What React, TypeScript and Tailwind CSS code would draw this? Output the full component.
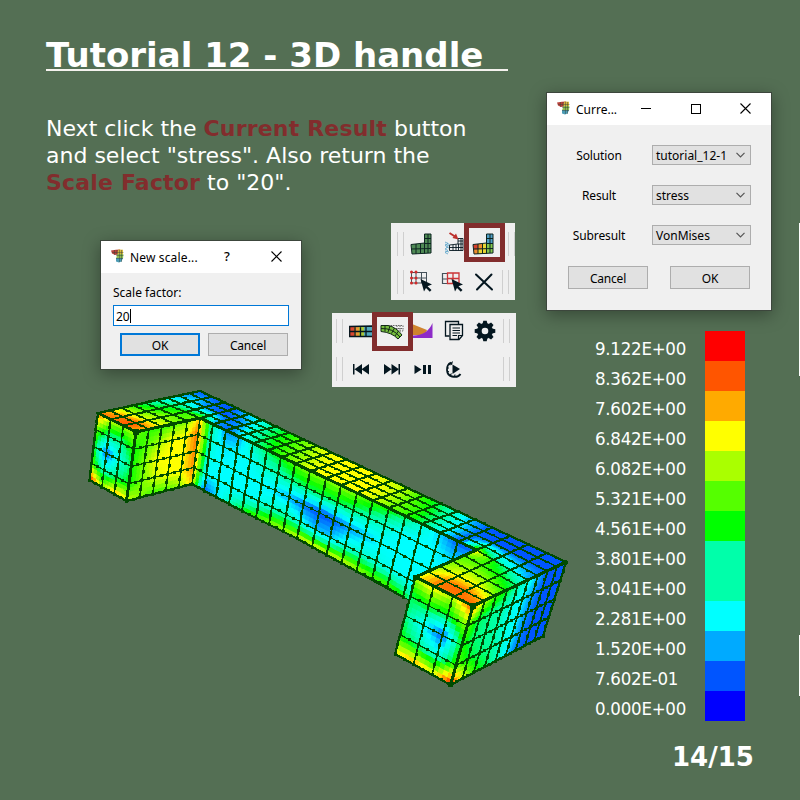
import React from "react";

type P = [number, number];

const PALETTE: number[][] = [
  [0, 0, 255], [0, 85, 255], [0, 170, 255], [0, 255, 255], [0, 255, 210], [0, 255, 150],
  [0, 255, 0], [85, 255, 0], [170, 255, 0], [255, 255, 0], [255, 170, 0], [255, 85, 0], [255, 0, 0],
];

function color(v: number) {
  const c = Math.max(0, Math.min(11.999, v));
  const i = Math.floor(c);
  const f = c - i;
  const m = PALETTE[i].map((a, k) => Math.round(a + (PALETTE[i + 1][k] - a) * f));
  return `rgb(${m[0]},${m[1]},${m[2]})`;
}

const mix = (a: P, b: P, t: number): P => [a[0] + (b[0] - a[0]) * t, a[1] + (b[1] - a[1]) * t];

/* Points between two ends, each step longer than the last by the ratio. */
function line(a: P, b: P, n: number, ratio = 1): P[] {
  const out: P[] = [];
  for (let i = 0; i <= n; i++) {
    const t = ratio === 1 ? i / n : (Math.pow(ratio, i) - 1) / (Math.pow(ratio, n) - 1);
    out.push(mix(a, b, t));
  }
  return out;
}

function sample(vals: number[][], u: number, v: number) {
  const R = vals.length - 1;
  const C = vals[0].length - 1;
  const y = Math.min(v * R, R - 1e-6);
  const x = Math.min(u * C, C - 1e-6);
  const j = Math.floor(y);
  const i = Math.floor(x);
  const fx = x - i;
  const fy = y - j;
  return (
    (vals[j][i] * (1 - fx) + vals[j][i + 1] * fx) * (1 - fy) +
    (vals[j + 1][i] * (1 - fx) + vals[j + 1][i + 1] * fx) * fy
  );
}

const INK = "#004b00";

interface FaceProps {
  top: P[];
  bottom: P[];
  rows: number;
  vals: number[][];
  across?: number;
  down?: number;
  mark?: [number, number];
}

function Face({ top, bottom, rows, vals, across = 1.2, down = 1.8, mark = [3, 3] }: FaceProps) {
  const n = top.length - 1;
  const S = 4;
  const at = (i: number, j: number): P => {
    const k = Math.min(Math.floor(i), n - 1);
    const f = i - k;
    return mix(mix(top[k], top[k + 1], f), mix(bottom[k], bottom[k + 1], f), j / rows);
  };
  const fills: React.ReactNode[] = [];
  for (let j = 0; j < rows * S; j++) {
    for (let i = 0; i < n * S; i++) {
      const x0 = i / S;
      const y0 = j / S;
      const d = 1 / S;
      const pts = [at(x0, y0), at(x0 + d, y0), at(x0 + d, y0 + d), at(x0, y0 + d)];
      const c = color(sample(vals, (x0 + d / 2) / n, (y0 + d / 2) / rows));
      fills.push(<polygon key={`${i}-${j}`} points={pts.map((p) => p.map((q) => q.toFixed(1)).join()).join(" ")} fill={c} stroke={c} strokeWidth={0.5} />);
    }
  }
  const h: string[] = [];
  const v: string[] = [];
  const marks: P[] = [];
  for (let j = 0; j <= rows; j++) {
    h.push("M" + top.map((_, i) => at(i, j).join()).join("L"));
    for (let i = 0; i <= n * 2; i++) marks.push(at(i / 2, j));
  }
  for (let i = 0; i <= n; i++) {
    v.push(`M${at(i, 0).join()}L${at(i, rows).join()}`);
    for (let j = 0; j < rows; j++) marks.push(at(i, j + 0.5));
  }
  return (
    <g shapeRendering="crispEdges">
      {fills}
      <path d={h.join("")} fill="none" stroke={INK} strokeWidth={across} />
      <path d={v.join("")} fill="none" stroke={INK} strokeWidth={down} />
      {marks.map((p, i) => (
        <rect key={i} x={Math.round(p[0] - mark[0] / 2)} y={Math.round(p[1] - mark[1] / 2)} width={mark[0]} height={mark[1]} fill={INK} />
      ))}
    </g>
  );
}

const FRONT_TOP: P[] = [
  [200, 418], [213, 424], [226, 430], [239, 436], [253, 443], [267, 450], [281, 457], [295, 463.5], [310, 471], [326, 478],
  [341, 485], [357, 493], [373, 500.5], [389, 508], [405.5, 516], [422, 524], [440, 533], [458, 541.5], [476.5, 550],
];
const FRONT_BOTTOM: P[] = [
  [192, 484], [204, 491], [216, 497], [229, 504], [242, 511], [256, 518], [269, 524], [283, 531.5], [297, 538.5], [312, 547],
  [326.5, 555], [341.5, 563], [356.5, 571], [372, 578.5], [387, 587], [403, 597], [419, 605], [436, 613], [453, 621],
];
const BEAM_BACK = line([200, 391], [566, 562], 24, 1.02);
const BEAM_FRONT: P[] = [
  ...line([156, 400], [200, 418], 3).slice(0, 3),
  ...FRONT_TOP,
  ...line([476.5, 550], [527.5, 580], 3).slice(1),
];
const SIDE_TOP = line([473, 606], [566, 562], 9, 0.965);
const SIDE_BOTTOM = line([450.5, 685], [543, 636], 9, 0.965);

const V_FRONT = [
  [9.5, 4.6, 1.7, 1.8, 4.3, 5.5, 6, 7, 7.5, 7.5, 7.8, 7.5, 6.7, 6.3, 5.5, 4, 2.5, 1, 1],
  [10.4, 4, 2.7, 3, 3.2, 4, 4.5, 5, 5.4, 5.5, 5.5, 5, 4.5, 4, 3, 3, 3, 2.5, 3],
  [10, 3.4, 3, 3, 3, 3, 2.6, 2.1, 1.3, 0.9, 1, 1.8, 2.3, 3, 3, 3, 3, 3, 3],
  [9.8, 3, 3, 3, 3, 3.3, 4, 4.3, 3.4, 2.2, 2.4, 3.6, 4, 3.6, 3.2, 3, 3, 3, 3],
  [8.5, 1, 2.5, 4.5, 6, 7, 7.6, 8, 8.6, 9, 8.7, 8.6, 8, 7, 7, 6, 4, 3, 3],
];
const V_BEAM = [
  [1, 1, 1, 1, 2.5, 3.5, 5, 6, 7, 8, 9, 9, 9, 9, 8.5, 8, 6.5, 5.5, 4, 2, 1, 1, 1, 1, 1],
  [2, 3, 1.6, 1, 1, 2, 4.5, 5.7, 6.5, 7.3, 8.3, 9, 9, 9, 9, 8.4, 7.2, 6.3, 5, 3, 1.2, 1, 1, 1, 1],
  [4, 5.5, 6.3, 7.5, 2, 1, 2.5, 4.7, 5.8, 6.7, 7.7, 8.8, 9, 9, 9, 8.4, 7.3, 6.6, 5.3, 3.2, 1, 8, 5, 3.5, 2],
];
const V_LEFT_TOP = [
  [4, 5.5, 6.3, 7.5], [5, 6, 7, 7], [6, 7, 8, 7.5], [8, 8, 8.6, 9], [9.4, 10.5, 11, 10], [10.9, 10.5, 11, 9.7],
];
const V_RIGHT_TOP = [
  [9.5, 6.2, 4.5, 3], [7, 6.8, 6, 5], [7.4, 8, 7.5, 6], [7.8, 9, 9, 7.5], [8.6, 10.6, 10.8, 9.6], [9, 10.6, 10.6, 11],
];
const V_LEFT_END = [
  [11, 8.5, 7.7, 8], [7, 4.9, 4.8, 6.5], [6, 1, 3.6, 5.4], [7, 4, 5, 6], [12, 8, 10, 9],
];
const V_LEFT_SIDE = [
  [7.5, 6.5, 6.5, 7, 7.5, 9.5], [6, 7, 8, 9, 9, 10.7], [6, 7.5, 9, 9, 9, 10.5], [6, 7.3, 8.5, 9, 9, 10.3], [8.4, 7.6, 6.6, 6.8, 7.7, 9.6],
];
const V_RIGHT_END = [
  [8, 9.4, 8.2, 11.2], [5.3, 6, 5.7, 7.6], [5.2, 3, 1, 5.9], [6, 4.8, 3.6, 6.5], [9.2, 10.2, 9, 12],
];
const V_RIGHT_SIDE = [
  [11, 8.4, 6.7, 6, 5, 3.6, 2.4, 1, 1, 1], [7.3, 5.4, 5, 4.7, 3.7, 2.9, 1.8, 1, 1, 1], [6.3, 5.2, 5, 4.6, 3.6, 2.9, 1.6, 1, 1, 1],
  [7.2, 5.8, 5.2, 5, 4, 2.9, 1.5, 1, 1, 1], [11.8, 8.8, 6.4, 5.5, 4.5, 2.6, 1.3, 1, 1, 1],
];

function Model() {
  return (
    <svg className="absolute left-0 top-0" width="800" height="800" viewBox="0 0 800 800">
      <Face top={FRONT_TOP} bottom={FRONT_BOTTOM} rows={4} vals={V_FRONT} />
      <Face top={BEAM_BACK} bottom={BEAM_FRONT} rows={4} vals={V_BEAM} across={1.6} down={2} mark={[4, 2]} />
      <Face top={line([156, 400], [200, 418], 3)} bottom={line([98, 413], [136, 432], 3)} rows={5} vals={V_LEFT_TOP} across={1.5} mark={[4, 2]} />
      <Face top={line([476.5, 550], [527.5, 580], 3)} bottom={line([415.5, 577], [473, 606], 3)} rows={5} vals={V_RIGHT_TOP} across={1.5} mark={[4, 2]} />
      <Face top={line([98, 413], [136, 432], 3)} bottom={line([89.5, 480], [126.5, 501], 3)} rows={4} vals={V_LEFT_END} down={1.5} />
      <Face top={line([136, 432], [200, 418], 5)} bottom={line([126.5, 501], [192, 484], 5)} rows={4} vals={V_LEFT_SIDE} down={1.5} />
      <Face top={line([415.5, 577], [473, 606], 3, 1.05)} bottom={line([395, 654], [450.5, 685], 3)} rows={4} vals={V_RIGHT_END} down={1.6} />
      <Face top={SIDE_TOP} bottom={SIDE_BOTTOM} rows={4} vals={V_RIGHT_SIDE} across={1.6} down={1.7} />
      <path
        d="M98 413L136 432L200 418L476.5 550M136 432L126.5 501M415.5 577L473 606L566 562M473 606L450.5 685M415.5 577L476.5 550"
        fill="none" stroke={INK} strokeWidth="3" shapeRendering="crispEdges"
      />
      <path
        d="M98 413L200 391L566 562L543 636L450.5 685L395 654L415.5 577M98 413L89.5 480L126.5 501L192 484L242 511L297 538.5L403 597"
        fill="none" stroke={INK} strokeWidth="2.200" shapeRendering="crispEdges"
      />
      <path d="M133 429h6v6h-6ZM470 603h6v6h-6ZM448 682h5v5h-5ZM563 560h4v5h-4ZM413 575h4v5h-4Z" fill={INK} />
    </svg>
  );
}

function AppIcon() {
  return (
    <svg width="14" height="14" viewBox="0 0 14 14" className="mb-[2px] shrink-0">
      <path d="M0 1.500L5 .8L9 .5V5L4 6L1 4.500Z" fill="#b8403a" />
      <path d="M7.500 .5L12 .8V6H6.500V3Z" fill="#d9b73e" />
      <path d="M6.500 5H12.300L12 9.500H5Z" fill="#8ebc50" />
      <path d="M5 9H12L10.500 12.500L8 13.500L5 12.500Z" fill="#4c9cb5" />
      <path d="M1 3.500H12.500M5 6.500H12.500M5 9.500H12M3.500 1V6M6 1V6M8.500 1V13M10.500 1V13" stroke="#36463a" strokeWidth=".45" fill="none" />
    </svg>
  );
}

function CloseIcon() {
  return (
    <svg width="11" height="11" viewBox="0 0 11 11" className="mb-[2px]">
      <path d="M.5.5L10.500 10.500M10.500.5L.5 10.500" stroke="#000" strokeWidth="1.1" />
    </svg>
  );
}

function Combo({ label, value }: { label: string; value: string }) {
  return (
    <div className="flex h-5 items-center">
      <div className="w-[104px] pt-[2px] text-center tracking-[-0.1px]">{label}</div>
      <div className="ml-px flex h-5 w-[99px] items-center justify-between border border-[#adadad] bg-[#e1e1e1] pl-[3px] pr-[5px]">
        <span className="whitespace-nowrap pt-[2px]">{value}</span>
        <svg width="9" height="6" viewBox="0 0 9 6"><path d="M.5.8L4.500 4.800L8.500.8" fill="none" stroke="#555" strokeWidth="1.2" /></svg>
      </div>
    </div>
  );
}

const UI = "font-['Noto_Sans','Open_Sans',sans-serif] text-[12px] leading-4 text-black";
const BTN = "flex items-center justify-center bg-[#e1e1e1] pt-[2px] tracking-[-0.2px]";

function ResultDialog() {
  return (
    <section className={`absolute left-[546px] top-[92px] h-[219px] w-[226px] border border-[#3c463c] bg-[#f0f0f0] shadow-[0_4px_16px_rgba(0,0,0,0.35)] ${UI}`}>
      <header className="flex h-8 items-center bg-white pl-[10px]">
        <AppIcon />
        <span className="ml-[5px] w-[65px] pt-px">Curre...</span>
        <svg className="mb-[2px]" width="11" height="11" viewBox="0 0 11 11"><path d="M0 5.500H10" stroke="#000" /></svg>
        <svg className="mb-[2px] ml-[38px]" width="11" height="11" viewBox="0 0 11 11"><path d="M1.500 1.500H10.500V10.500H1.500Z" fill="none" stroke="#000" shapeRendering="crispEdges" /></svg>
        <span className="ml-[39px]"><CloseIcon /></span>
      </header>
      <div className="flex flex-col gap-5 pt-5">
        <Combo label="Solution" value="tutorial_12-1" />
        <Combo label="Result" value="stress" />
        <Combo label="Subresult" value="VonMises" />
      </div>
      <div className="mt-[21px] flex gap-[22px] pl-[21px]">
        <div className={`${BTN} h-[23px] w-20 border border-[#adadad]`}>Cancel</div>
        <div className={`${BTN} h-[23px] w-20 border border-[#adadad]`}>OK</div>
      </div>
    </section>
  );
}

function ScaleDialog() {
  return (
    <section className={`absolute left-[100px] top-[240px] h-[130px] w-[202px] border border-[#3c463c] bg-[#f0f0f0] shadow-[0_4px_16px_rgba(0,0,0,0.35)] ${UI}`}>
      <header className="flex h-8 items-center bg-white pl-[10px]">
        <AppIcon />
        <span className="ml-[5px] w-[94px] pt-px tracking-[0.15px]">New scale...</span>
        <span className="pb-[2px] text-[13px] font-medium">?</span>
        <span className="ml-[41px]"><CloseIcon /></span>
      </header>
      <div className="px-3 pt-3">Scale factor:</div>
      <div className="mx-3 mt-1 flex h-[21px] items-center border border-[#0078d7] bg-white pl-[2px] pt-px">
        <span className="pt-px">20</span><span className="h-[14px] w-px bg-black" />
      </div>
      <div className="mt-[7px] flex gap-2 pl-[19px]">
        <div className={`${BTN} h-[23px] w-20 border-2 border-[#0078d7]`}>OK</div>
        <div className={`${BTN} h-[23px] w-20 border border-[#adadad]`}>Cancel</div>
      </div>
    </section>
  );
}

function Grip() {
  return <div className="h-6 w-[7px] shrink-0 border-x border-[#cfcfcf]" />;
}

function Tool({ children, frame }: { children: React.ReactNode; frame?: string }) {
  return (
    <div className="relative flex h-6 w-[31px] shrink-0 items-center justify-center">
      <svg width="24" height="24" viewBox="0 0 24 24">{children}</svg>
      {frame && <div className={`absolute -left-[4px] z-10 h-[39px] w-[41px] border-[5px] border-[#822d2d] ${frame}`} />}
    </div>
  );
}

const DARK = "#04161f";
const L_GRID = "M1 12.500L14.500 11V2H21V21L2 22ZM1.500 17L21 16.500M14.500 6.500H21M14.500 11.500H21M6 12V22M10.500 11.500V21.500M14.500 11V21.500M18 2V21";
const CURSOR = "M10.500 9L22 14.500L17.500 16.200L21.500 20L19.800 21.800L16 18L14 21.500Z";

function LShape({ colored = false }: { colored?: boolean }) {
  return (
    <>
      {colored ? (
        <>
          <path d="M1 12.500L6 12V22H2Z" fill="#d6402c" />
          <path d="M6 12L10.500 11.500V22H6Z" fill="#ee8b2d" />
          <path d="M10.500 11.500H14.500V22H10.500Z" fill="#e8d534" />
          <path d="M14.500 11H21V21H14.500Z" fill="#83c74c" />
          <path d="M14.500 2H21V11.500H14.500Z" fill="#509fc6" />
          <path d="M2 17.500H6V22H2Z" fill="#ee8b2d" />
          <path d="M6 17.500H10.500V22H6Z" fill="#e8d534" />
        </>
      ) : (
        <path d="M1 12.500L14.500 11V2H21V21L2 22Z" fill="#4f8a55" />
      )}
      <path d={L_GRID} fill="none" stroke="#0d2521" strokeWidth="1" />
    </>
  );
}

function ModelToolbar() {
  return (
    <div className="absolute left-[391px] top-[223px] flex h-[77px] w-[124px] flex-col gap-[14px] bg-[#efefef] pt-[9px]">
      <div className="flex pl-[6px]">
        <Grip />
        <div className="ml-[2px] flex">
          <Tool><LShape /></Tool>
          <Tool>
            <path d="M8.500 13L17 12V6.500H22V18.500H8.500ZM8.500 15.500H22M12 13V18.500M15 12.500V18.500M17.500 12V18.500M20 6.500V18.500M17 9H22M17 12H22" fill="none" stroke={DARK} strokeWidth=".9" />
            <path d="M4 10L7 11.500L4 13.500L7 15L4 17L7 18.500L4 20.500L7 22M6 11L9 13M5 15L8 16M4 12L8 14M4 19L8 20" fill="none" stroke="#64a9cd" strokeWidth=".9" />
            <path d="M8.500 1L14 4.500" stroke="#bd302c" strokeWidth="2" />
            <path d="M17.500 7.500L11.500 6L15 1.500Z" fill="#bd302c" />
          </Tool>
          <Tool frame="-top-[9px]"><LShape colored /></Tool>
        </div>
        <div className="ml-[9px]"><Grip /></div>
      </div>
      <div className="flex pl-[6px]">
        <Grip />
        <div className="ml-[2px] flex">
          <Tool>
            <path d="M1 2.500H17M1 8H17M1 13H17M1.500 2V13M6 2V13M11.500 2V13M16.500 2V13" stroke="#44515a" strokeWidth="1" />
            {[2, 8, 13].map((y) => <g key={y} fill="#d02a2a"><circle cx="1.500" cy={y} r="1.500" /><circle cx="6" cy={y} r="1.500" /></g>)}
            <path d={CURSOR} fill={DARK} />
          </Tool>
          <Tool>
            <path d="M1 3.500H7M1 9H7M1 13.500H7M1.500 3V14" stroke="#44515a" strokeWidth="1.200" />
            <path d="M6.500 3H18V13.500H6.500ZM6.500 8.500H18M12 3V13" fill="none" stroke="#cc3336" strokeWidth="1.300" />
            <path d={CURSOR} fill={DARK} />
          </Tool>
          <Tool><path d="M4 4.500L20 19.500M19.500 4.500L5 19.500" stroke={DARK} strokeWidth="2" strokeLinecap="round" /></Tool>
        </div>
        <div className="ml-[3px]"><Grip /></div>
      </div>
    </div>
  );
}

function ResultToolbar() {
  return (
    <div className="absolute left-[332px] top-[313px] flex h-[74px] w-[184px] flex-col gap-[14px] bg-[#efefef] pt-[6px]">
      <div className="flex pl-[4px]">
        <Grip />
        <div className="ml-[2px] flex">
          <Tool>
            <path d="M0 7H6V18H0Z" fill="#d94730" /><path d="M5 7H10V18H5Z" fill="#e99a33" />
            <path d="M10 7H15V18H10Z" fill="#a8c63b" /><path d="M15 7H24V18H15Z" fill="#52a8bc" />
            <path d="M.7 7.500L24 7V17.500H.7ZM0 12.500H24M6 7V18M11.500 7V18M17 7V18" fill="none" stroke={DARK} strokeWidth="1.300" />
          </Tool>
          <Tool frame="-top-[7px]">
            <path d="M8 6.500H23V12H12M17 6.500V12M12 6.500V11M20 6.500V12M8 9.500H23" fill="none" stroke="#555" strokeWidth=".9" strokeDasharray="1.500 1" />
            <path d="M1 6.500L8 6.500Q16 8 22 16L18 20Q12 13.500 1 12.500Z" fill="#76bd3d" stroke="#132b16" strokeWidth="1" />
            <path d="M1 9.500Q13 9 20 18M5 6.500V12.500M10 7L8 13M14.500 9L11.500 14.500M18.500 12L15 17" fill="none" stroke="#132b16" strokeWidth="1" />
          </Tool>
          <Tool>
            <path d="M1 5L16 11L14 16H1Z" fill="#cf832e" />
            <path d="M21.500 4V19H1V16.500Q16 17 21.500 4Z" fill="#8d2bc8" />
          </Tool>
          <Tool>
            <path d="M16.500 5V2.500H3.500V17H7.500" fill="none" stroke={DARK} strokeWidth="1.300" />
            <path d="M8 5.500H20.500V16.500L17 20.500H8Z" fill="#eee" stroke={DARK} strokeWidth="1.300" />
            <path d="M10.500 9H18M10.500 11.500H18M10.500 14H18M10.500 16.500H15M16.500 20V16.500H20" fill="none" stroke={DARK} strokeWidth="1.200" />
          </Tool>
          <Tool>
            <circle cx="12" cy="12" r="5.600" fill="none" stroke={DARK} strokeWidth="4.600" />
            {[0, 45, 90, 135, 180, 225, 270, 315].map((a) => <path key={a} d="M10.300 1.700H13.700L14.500 5H9.500Z" fill={DARK} transform={`rotate(${a} 12 12)`} />)}
          </Tool>
        </div>
        <div className="ml-[3px]"><Grip /></div>
      </div>
      <div className="flex pl-[4px]">
        <Grip />
        <div className="ml-[2px] flex">
          <Tool><path d="M4 7H5.500V17.500H4ZM13 7V17.500L5.500 12.200ZM20 7V17.500L12.500 12.200Z" fill={DARK} /></Tool>
          <Tool><path d="M18.500 7H20V17.500H18.500ZM4 7V17.500L11.500 12.200ZM11.500 7V17.500L19 12.200Z" fill={DARK} /></Tool>
          <Tool><path d="M3.500 8V17L10.500 12.500ZM12 8H15V17H12ZM17 8H20V17H17Z" fill={DARK} /></Tool>
          <Tool>
            <path d="M9 5.500C3.500 8 3.500 18 10 19.500Q16 21 18.500 17" fill="none" stroke={DARK} strokeWidth="1.800" />
            <path d="M6.500 7L8.500 8M5 11H7M5 15L7 14.500M8 18.500L9.500 16.500M12.500 20L13 17.500" stroke={DARK} strokeWidth="1.200" />
            <path d="M10.500 7.500V17L18 12Z" fill={DARK} />
            <path d="M7 7L11 4L10 8Z" fill={DARK} />
          </Tool>
        </div>
        <div className="ml-[34px]"><Grip /></div>
      </div>
    </div>
  );
}

const LEGEND = [
  ["9.122E+00", "bg-[#ff0000]"], ["8.362E+00", "bg-[#ff5500]"], ["7.602E+00", "bg-[#ffaa00]"],
  ["6.842E+00", "bg-[#ffff00]"], ["6.082E+00", "bg-[#aaff00]"], ["5.321E+00", "bg-[#55ff00]"],
  ["4.561E+00", "bg-[#00ff00]"], ["3.801E+00", "bg-[#00ffaa]"], ["3.041E+00", "bg-[#00ffaa]"],
  ["2.281E+00", "bg-[#00ffff]"], ["1.520E+00", "bg-[#00aaff]"], ["7.602E-01", "bg-[#0055ff]"],
  ["0.000E+00", "bg-[#0000ff]"],
];

export default function App() {
  return (
    <main className="relative flex h-[800px] w-[800px] flex-col overflow-hidden bg-[#546f54] font-['DejaVu_Sans',sans-serif] text-white">
      <h1 className="ml-[46px] mt-[34px] h-[37px] w-[462px] whitespace-nowrap border-b-2 border-[#f4f2ee] text-[34px] font-bold leading-[42px]">
        Tutorial 12 - 3D handle
      </h1>
      <p className="ml-[46px] mt-[44px] whitespace-nowrap text-[22px] leading-[27px]">
        Next click the <b className="tracking-[0.18px] text-[#822d2d]">Current Result</b> button<br />
        and select "stress". Also return the<br />
        <b className="tracking-[0.18px] text-[#822d2d]">Scale Factor</b> to "20".
      </p>
      <ul className="ml-[595px] mt-[135px] font-['DejaVu_Sans_Condensed','DejaVu_Sans',sans-serif] text-[18.5px] leading-[30px] tracking-[-0.25px]">
        {LEGEND.map(([text, bg]) => (
          <li key={text} className="flex h-[30px]">
            <span className="w-[110px] pt-[3px]">{text}</span>
            <span className={`h-[30px] w-10 ${bg}`} />
          </li>
        ))}
      </ul>
      <div className="ml-[672px] mt-[20px] text-[26px] font-bold leading-[32px]">14/15</div>
      <Model />
      <ResultDialog />
      <ScaleDialog />
      <ModelToolbar />
      <ResultToolbar />
      <div className="absolute right-0 top-[223px] h-[153px] w-px bg-white" />
      <div className="absolute right-0 top-[635px] h-[61px] w-px bg-white" />
    </main>
  );
}
